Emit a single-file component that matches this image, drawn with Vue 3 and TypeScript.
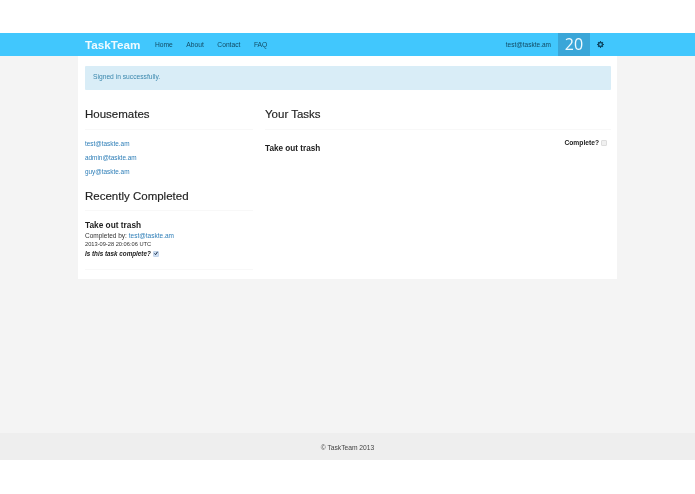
<script setup lang="ts">
const navLinks: string[] = ['Home', 'About', 'Contact', 'FAQ']
const mates: string[] = ['test@taskte.am', 'admin@taskte.am', 'guy@taskte.am']
</script>

<template>
  <div class="page">
    <header class="navbar">
      <span class="brand">TaskTeam</span>
      <nav class="nav-links">
        <a v-for="l in navLinks" :key="l" class="nav-link">{{ l }}</a>
      </nav>
      <span class="spacer"></span>
      <span class="nav-email">test@taskte.am</span>
      <span class="count">20</span>
      <svg class="gear" width="7" height="7" viewBox="0 0 8 8">
        <circle cx="4" cy="4" r="2.3" fill="none" stroke="#0f4a66" stroke-width="1.7" />
        <path d="M4 0v1.4M4 6.6V8M0 4h1.4M6.6 4H8M1.2 1.2l1 1M5.8 5.8l1 1M1.2 6.8l1-1M5.8 2.2l1-1" stroke="#0f4a66" stroke-width="1.2" />
      </svg>
    </header>

    <div class="body">
      <main class="container">
        <div class="alert">Signed in successfully.</div>
        <div class="columns">
          <aside class="side">
            <h2 class="heading">Housemates</h2>
            <ul class="mates">
              <li v-for="m in mates" :key="m"><a class="link">{{ m }}</a></li>
            </ul>
            <h2 class="heading recent">Recently Completed</h2>
            <div class="done">
              <div class="done-title">Take out trash</div>
              <div class="done-by">Completed by: <a class="link">test@taskte.am</a></div>
              <div class="done-date">2013-09-28 20:06:06 UTC</div>
              <div class="done-q">
                <em>Is this task complete?</em>
                <span class="check on">
                  <svg width="7" height="7" viewBox="0 0 7 7"><path d="M0.8 3.4l1.9 2.2L6.2 .6" fill="none" stroke="#14243c" stroke-width="1.7" /></svg>
                </span>
              </div>
            </div>
          </aside>
          <section class="tasks">
            <h2 class="heading">Your Tasks</h2>
            <div class="task-row">
              <span class="task-name">Take out trash</span>
              <span class="task-check">Complete?<span class="check"></span></span>
            </div>
          </section>
        </div>
      </main>
    </div>

    <footer class="footer">© TaskTeam 2013</footer>
    <div class="bottom"></div>
  </div>
</template>

<style>
html, body { margin: 0; background: #fff; }
</style>

<style scoped>
.page {
  width: 695px;
  height: 494px;
  background: #fff;
  font-family: "Liberation Sans", Arial, sans-serif;
  color: #222;
  display: flex;
  flex-direction: column;
  padding-top: 33px;
  box-sizing: border-box;
  filter: blur(0.35px);
  overflow: hidden;
}
.navbar {
  height: 23px;
  background: #41c7fd;
  flex: none;
  display: flex;
  align-items: center;
  padding: 0 91px 0 85px;
}
.brand {
  font-size: 11.7px;
  font-weight: 700;
  color: #eefaff;
  width: 70px;
}
.nav-links { display: flex; gap: 13.5px; }
.nav-link { font-size: 6.7px; color: #124a63; }
.spacer { flex: 1; }
.nav-email { font-size: 6.5px; color: #124a63; margin-right: 7px; }
.count {
  width: 32px;
  height: 23px;
  background: #3aa6d8;
  color: #eefaff;
  font-family: "Open Sans", sans-serif;
  font-size: 16px;
  line-height: 23px;
  text-align: center;
}
.gear { margin: 0 0 1px 7px; }
.body {
  flex: none;
  height: 377px;
  background: #f4f4f4;
}
.container {
  height: 223px;
  background: #fff;
  margin-left: 78px;
  width: 539px;
  box-sizing: border-box;
  padding: 10px 6px 0 7px;
}
.alert {
  height: 24px;
  background: #d9edf7;
  color: #3a87ad;
  font-size: 6.7px;
  line-height: 22px;
  padding-left: 8px;
  border-radius: 1px;
  box-sizing: border-box;
}
.columns { display: flex; gap: 12px; }
.side { width: 168px; }
.tasks { flex: 1; }
.heading {
  margin: 0;
  font-size: 11.5px;
  font-weight: 400;
  color: #222;
  padding-top: 17px;
  height: 22px;
  line-height: 14px;
  border-bottom: 1px solid #f8f8f8;
  -webkit-text-stroke: 0.15px #222;
}
.mates { list-style: none; margin: 0; padding: 7px 0 0; }
.mates li { font-size: 6.4px; height: 14px; line-height: 14px; }
.link { color: #2f7fb8; }
.recent { padding-top: 10px; height: 21px; }
.done { padding-top: 9px; height: 49px; border-bottom: 1px solid #f8f8f8; }
.done-title { font-size: 8.3px; font-weight: 700; color: #222; line-height: 11px; }
.done-by { font-size: 6.5px; line-height: 9px; color: #333; }
.done-date { font-size: 5.7px; line-height: 9px; color: #333; }
.done-q { font-size: 6.3px; font-weight: 700; line-height: 9px; display: flex; align-items: center; gap: 1px; color: #222; }
.check {
  display: inline-flex;
  align-items: center;
  justify-content: center;
  width: 4px;
  height: 4px;
  background: #f0f0f0;
  border: 1px solid #ddd;
  border-radius: 1px;
  margin-left: 1px;
}
.check.on { background: #cfe0f4; border-color: #c2d4ea; }
.task-row {
  display: flex;
  justify-content: space-between;
  align-items: flex-start;
  padding-top: 8px;
}
.task-name { font-size: 8.2px; font-weight: 700; line-height: 22px; }
.task-check { font-size: 6.7px; font-weight: 700; display: flex; align-items: center; gap: 1px; margin-right: 4px; line-height: 10px; }
.footer {
  flex: none;
  height: 27px;
  background: #eeeeee;
  color: #444;
  font-size: 6.7px;
  line-height: 29px;
  text-align: center;
}
.bottom { flex: 1; background: #fff; }
</style>
